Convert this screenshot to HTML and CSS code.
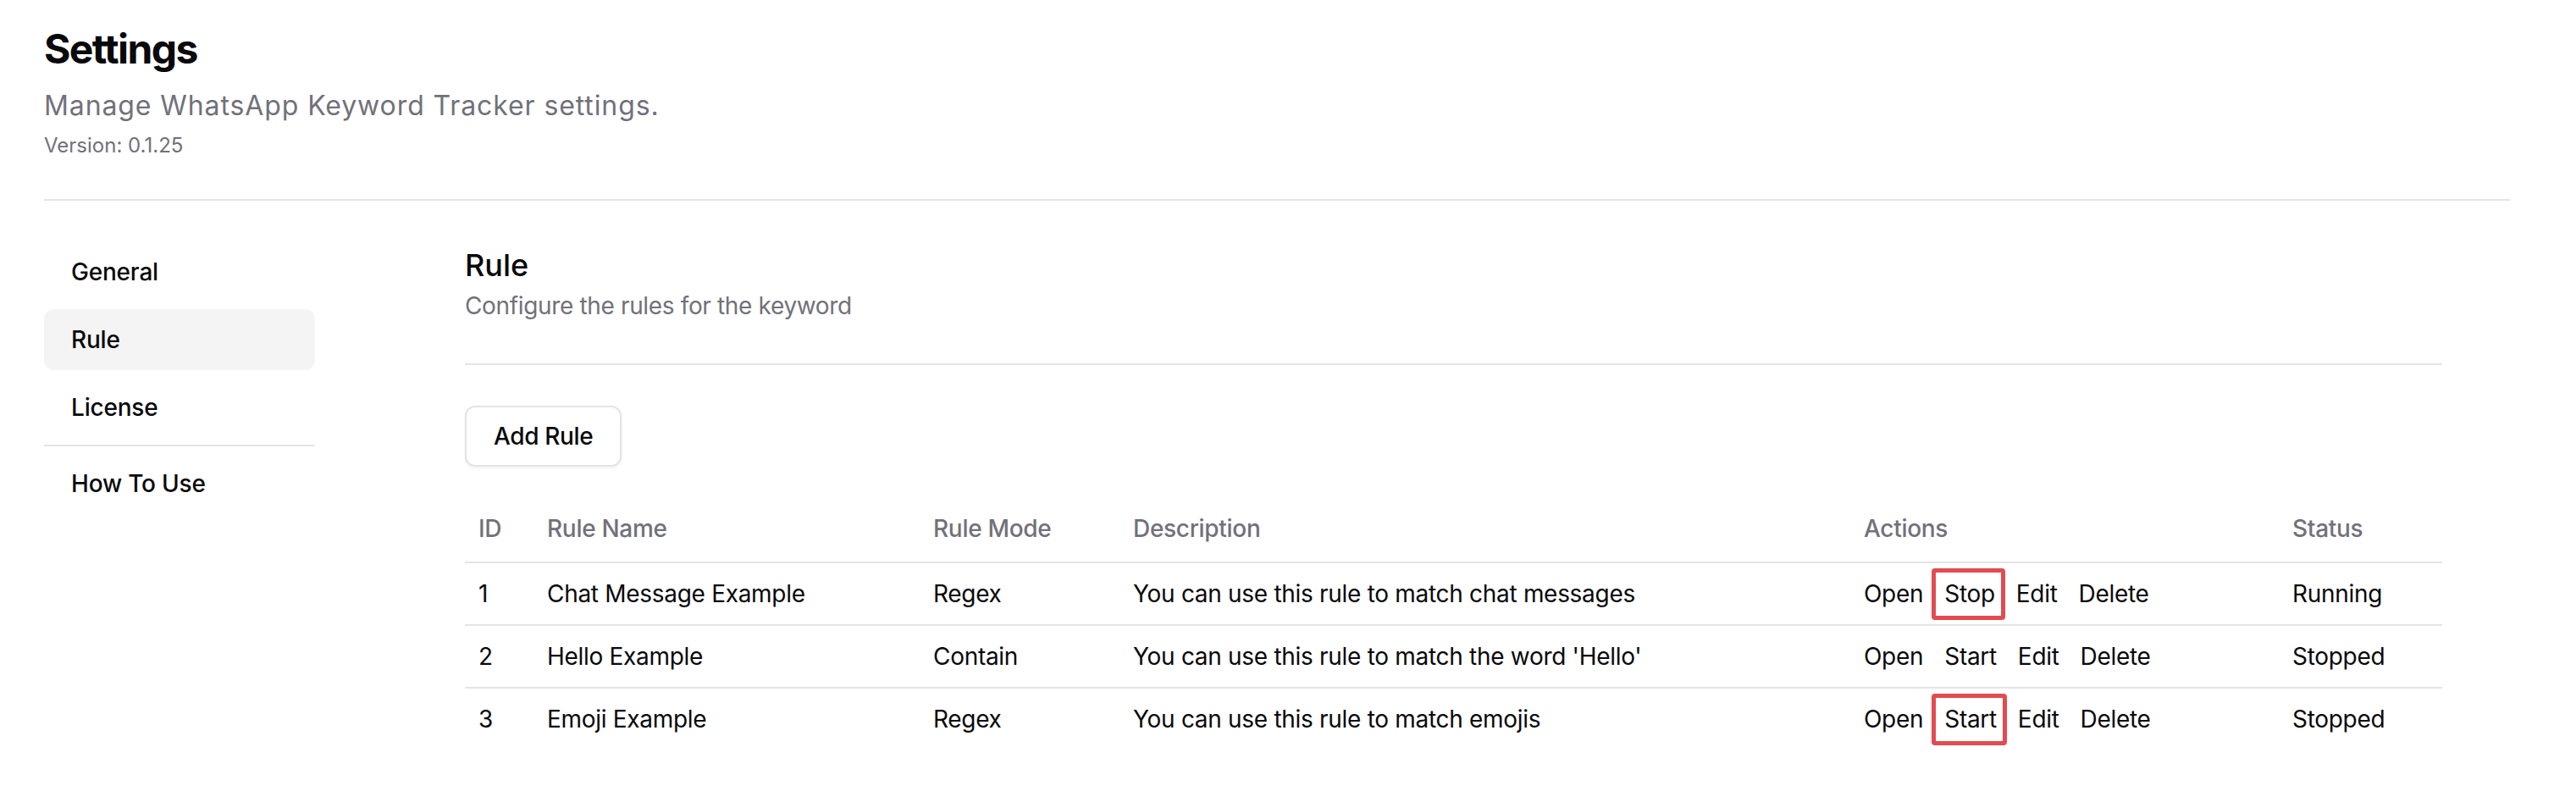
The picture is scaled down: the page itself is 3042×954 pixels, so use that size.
FILE: index.html
```html
<!DOCTYPE html>
<html lang="en">
<head>
<meta charset="utf-8">
<title>Settings</title>
<link rel="stylesheet" href="styles.css">
</head>
<body>
<div class="page">
  <header class="head">
    <h2 class="title">Settings</h2>
    <p class="subtitle">Manage WhatsApp Keyword Tracker settings.</p>
    <p class="version">Version: 0.1.25</p>
  </header>
  <div class="sep"></div>
  <div class="layout">
    <aside class="sidebar">
      <nav class="nav">
        <a class="nav-item" href="#">General</a>
        <a class="nav-item active" href="#">Rule</a>
        <a class="nav-item" href="#">License</a>
        <div class="nav-sep"></div>
        <a class="nav-item" href="#">How To Use</a>
      </nav>
    </aside>
    <main class="content">
      <h3 class="section-title">Rule</h3>
      <p class="section-desc">Configure the rules for the keyword</p>
      <div class="divider"></div>
      <div class="toolbar">
        <button class="btn" type="button">Add Rule</button>
      </div>
      <table class="rules">
        <colgroup>
          <col class="c-id">
          <col class="c-name">
          <col class="c-mode">
          <col class="c-desc">
          <col class="c-actions">
          <col class="c-status">
        </colgroup>
        <thead>
          <tr>
            <th>ID</th>
            <th>Rule Name</th>
            <th>Rule Mode</th>
            <th>Description</th>
            <th>Actions</th>
            <th>Status</th>
          </tr>
        </thead>
        <tbody>
          <tr>
            <td>1</td>
            <td>Chat Message Example</td>
            <td>Regex</td>
            <td>You can use this rule to match chat messages</td>
            <td><div class="actions"><span class="act">Open</span><span class="act hl">Stop</span><span class="act">Edit</span><span class="act">Delete</span></div></td>
            <td>Running</td>
          </tr>
          <tr>
            <td>2</td>
            <td>Hello Example</td>
            <td>Contain</td>
            <td>You can use this rule to match the word 'Hello'</td>
            <td><div class="actions"><span class="act">Open</span><span class="act">Start</span><span class="act">Edit</span><span class="act">Delete</span></div></td>
            <td>Stopped</td>
          </tr>
          <tr>
            <td>3</td>
            <td>Emoji Example</td>
            <td>Regex</td>
            <td>You can use this rule to match emojis</td>
            <td><div class="actions"><span class="act">Open</span><span class="act hl">Start</span><span class="act">Edit</span><span class="act">Delete</span></div></td>
            <td>Stopped</td>
          </tr>
        </tbody>
      </table>
    </main>
  </div>
</div>
</body>
</html>
```
FILE: styles.css
```css
html, body {
  margin: 0;
  padding: 0;
  background: #ffffff;
}

body {
  font-family: Inter, "Liberation Sans", sans-serif;
  color: #09090b;
}

.page {
  padding: 26px 78px 0 52px;
}

.title {
  margin: 0;
  font-size: 48px;
  line-height: 64px;
  font-weight: 700;
  letter-spacing: -1.6px;
}

.subtitle {
  margin: 11px 0 0;
  font-size: 32px;
  line-height: 48px;
  color: #71717a;
  letter-spacing: 0.9px;
}

.version {
  margin: 7px 0 0;
  font-size: 24px;
  line-height: 32px;
  color: #71717a;
}

.sep {
  height: 2px;
  background: #e4e4e7;
  margin: 47px 0 48px;
}

.layout {
  display: flex;
  gap: 177px;
}

.sidebar {
  width: 320px;
  flex-shrink: 0;
}

.nav {
  display: flex;
  flex-direction: column;
  gap: 8px;
}

.nav-item {
  display: flex;
  align-items: center;
  height: 72px;
  padding: 0 32px;
  border-radius: 12px;
  font-size: 28px;
  line-height: 40px;
  font-weight: 500;
  letter-spacing: -0.2px;
  color: #09090b;
  text-decoration: none;
}

.nav-item.active {
  background: #f4f4f5;
}

.nav-sep {
  height: 2px;
  background: #e4e4e7;
}

.content {
  flex: 1;
  max-width: 2335px;
  min-width: 0;
}

.section-title {
  margin: 0;
  font-size: 36px;
  line-height: 56px;
  font-weight: 500;
}

.section-desc {
  margin: 0;
  font-size: 28px;
  line-height: 40px;
  color: #71717a;
  letter-spacing: -0.35px;
}

.divider {
  height: 2px;
  background: #e4e4e7;
  margin: 48px 0;
}

.toolbar {
  display: flex;
}

.btn {
  display: flex;
  align-items: center;
  height: 72px;
  padding: 0 32px;
  border: 2px solid #e4e4e7;
  border-radius: 12px;
  background: #ffffff;
  box-shadow: 0 2px 4px rgba(0, 0, 0, 0.05);
  font-family: inherit;
  font-size: 28px;
  font-weight: 500;
  letter-spacing: -0.35px;
  color: #09090b;
}

.rules {
  width: 100%;
  margin-top: 34px;
  border-collapse: collapse;
  table-layout: fixed;
  font-size: 28px;
  line-height: 40px;
  letter-spacing: -0.3px;
}

.c-id { width: 81px; }
.c-name { width: 456px; }
.c-mode { width: 236px; }
.c-desc { width: 863px; }
.c-actions { width: 506px; }
.c-status { width: 193px; }

.rules th {
  height: 78px;
  padding: 0 16px;
  text-align: left;
  font-weight: 500;
  color: #71717a;
  border-bottom: 2px solid #e4e4e7;
  white-space: nowrap;
}

.rules td {
  padding: 16px;
  border-bottom: 2px solid #e4e4e7;
  white-space: nowrap;
  vertical-align: middle;
}

.rules tbody tr:last-child td {
  border-bottom: 0;
}

.actions {
  display: flex;
  gap: 25px;
}

.act {
  position: relative;
}

.hl::after {
  content: "";
  position: absolute;
  top: -10px;
  bottom: -11px;
  left: -15px;
  right: -12px;
  border: 5px solid #e24b4f;
  border-radius: 4px;
}
```
